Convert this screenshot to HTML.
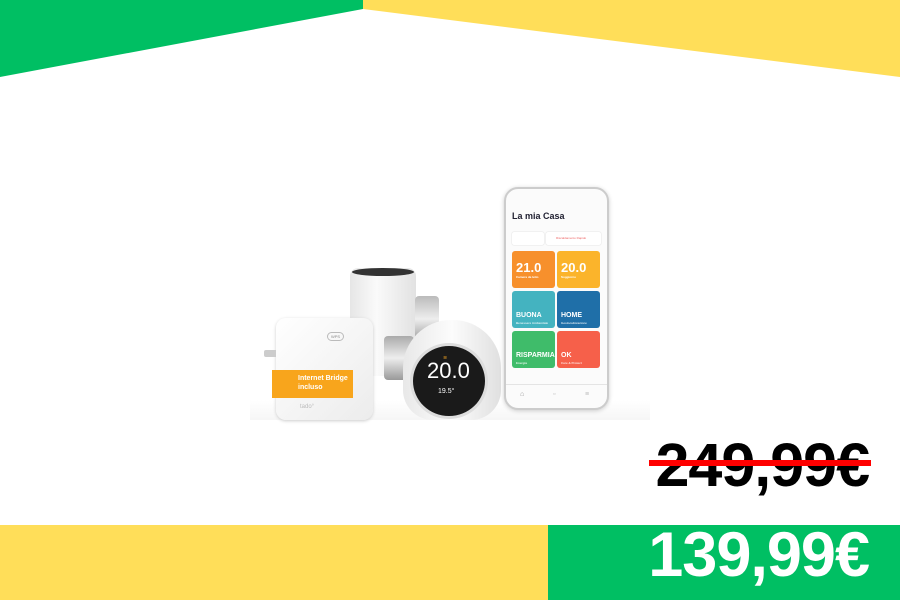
<!DOCTYPE html>
<html><head><meta charset="utf-8"><style>
*{margin:0;padding:0;box-sizing:border-box}
body{width:900px;height:600px;overflow:hidden;background:#fff;position:relative;font-family:"Liberation Sans",sans-serif}
.a{position:absolute}
.t{position:absolute;border-radius:3px;color:#fff;font-weight:bold}
.t b{position:absolute;left:4px;font-size:7px;bottom:9px}
.t i{position:absolute;left:4px;bottom:3px;font-size:3px;font-style:normal;opacity:.8}
.t .n{position:absolute;left:4px;top:9px;font-size:13px}
</style></head><body>
<svg class="a" style="left:0;top:0" width="900" height="80">
<polygon points="0,0 363,0 363,9 0,77" fill="#00bf63"/>
<polygon points="363,0 900,0 900,77 363,9" fill="#ffde59"/>
</svg>
<div class="a" style="left:0;top:525px;width:548px;height:75px;background:#ffde59"></div>
<div class="a" style="left:548px;top:525px;width:352px;height:75px;background:#00bf63"></div>
<div class="a" style="left:250px;top:400px;width:400px;height:20px;background:linear-gradient(#fff,#f6f6f6)"></div>

<!-- back thermostat -->
<div class="a" style="left:350px;top:268px;width:66px;height:108px;background:linear-gradient(90deg,#e6e6e6,#fafafa 40%,#e2e2e2);border-radius:8px"></div>
<div class="a" style="left:352px;top:268px;width:62px;height:8px;background:#333;border-radius:50%"></div>
<div class="a" style="left:415px;top:296px;width:24px;height:46px;background:linear-gradient(#bbb,#eee,#999);border-radius:4px"></div>
<div class="a" style="left:384px;top:336px;width:30px;height:44px;background:linear-gradient(#aaa,#eee,#999);border-radius:4px"></div>
<!-- front thermostat -->
<div class="a" style="left:403px;top:320px;width:98px;height:100px;background:linear-gradient(90deg,#e8e8e8,#fcfcfc 50%,#e0e0e0);border-radius:48px 48px 30px 30px"></div>
<div class="a" style="left:410px;top:343px;width:78px;height:76px;background:#1a1a1a;border-radius:50%;border:3px solid #ddd"></div>
<div class="a" style="left:427px;top:358px;color:#fff;font-size:22px">20.0</div>
<div class="a" style="left:438px;top:388px;color:#fff;font-size:7px">19.5°</div>
<div class="a" style="left:443px;top:355px;color:#f5a623;font-size:5px">≋</div>
<!-- bridge -->
<div class="a" style="left:264px;top:350px;width:16px;height:7px;background:#ccc;border-radius:2px"></div>
<div class="a" style="left:276px;top:318px;width:97px;height:102px;background:linear-gradient(135deg,#fff,#ececec);border-radius:10px;box-shadow:0 1px 3px #ccc"></div>
<div class="a" style="left:327px;top:332px;width:17px;height:9px;border:1px solid #bbb;border-radius:5px;font-size:4px;color:#888;text-align:center;line-height:7px">WPS</div>
<div class="a" style="left:272px;top:370px;width:81px;height:28px;background:#f8a51c;color:#fff;font-size:7px;font-weight:bold;padding:4px 0 0 26px;line-height:9px">Internet Bridge<br>incluso</div>
<div class="a" style="left:300px;top:404px;font-size:6px;color:#bbb">tado°</div>

<!-- phone -->
<div class="a" style="left:504px;top:187px;width:105px;height:223px;border:2px solid #ccc;border-radius:14px;background:#fbfbfb;box-shadow:0 1px 4px #ccc"></div>
<div class="a" style="left:512px;top:211px;font-size:9px;font-weight:bold;color:#223">La mia Casa</div>
<div class="a" style="left:512px;top:232px;width:32px;height:13px;background:#fff;border-radius:2px;box-shadow:0 0 1px #bbb"></div>
<div class="a" style="left:546px;top:232px;width:55px;height:13px;background:#fff;border-radius:2px;box-shadow:0 0 1px #bbb;font-size:3px;color:#e66;padding:4px 0 0 10px">Riscaldamento Rapido</div>
<div class="t" style="left:512px;top:251px;width:43px;height:37px;background:#f7902c"><span class="n">21.0</span><b style="font-size:3px">Camera da letto</b></div>
<div class="t" style="left:557px;top:251px;width:43px;height:37px;background:#fbb42b"><span class="n">20.0</span><b style="font-size:3px">Soggiorno</b></div>
<div class="t" style="left:512px;top:291px;width:43px;height:37px;background:#44b3c0"><b>BUONA</b><i>Benessere Ambientale</i></div>
<div class="t" style="left:557px;top:291px;width:43px;height:37px;background:#1f6fa8"><b>HOME</b><i>Geolocalizzazione</i></div>
<div class="t" style="left:512px;top:331px;width:43px;height:37px;background:#3fbc6a"><b>RISPARMIA</b><i>Energia</i></div>
<div class="t" style="left:557px;top:331px;width:43px;height:37px;background:#f6604a"><b>OK</b><i>Care &amp; Protect</i></div>
<div class="a" style="left:506px;top:384px;width:101px;height:1px;background:#e4e4e4"></div>
<div class="a" style="left:520px;top:391px;font-size:7px;color:#999">⌂</div>
<div class="a" style="left:553px;top:391px;font-size:7px;color:#bbb">▫</div>
<div class="a" style="left:585px;top:391px;font-size:7px;color:#bbb">≡</div>

<!-- prices -->
<div class="a" style="right:31px;top:430px;font-size:61px;font-weight:bold;color:#000;letter-spacing:-1px;line-height:70px">249,99€</div>
<div class="a" style="left:649px;top:460px;width:222px;height:6px;background:#f00"></div>
<div class="a" style="right:31px;top:520px;font-size:63px;font-weight:bold;color:#fff;letter-spacing:-1px;line-height:70px">139,99€</div>
</body></html>
